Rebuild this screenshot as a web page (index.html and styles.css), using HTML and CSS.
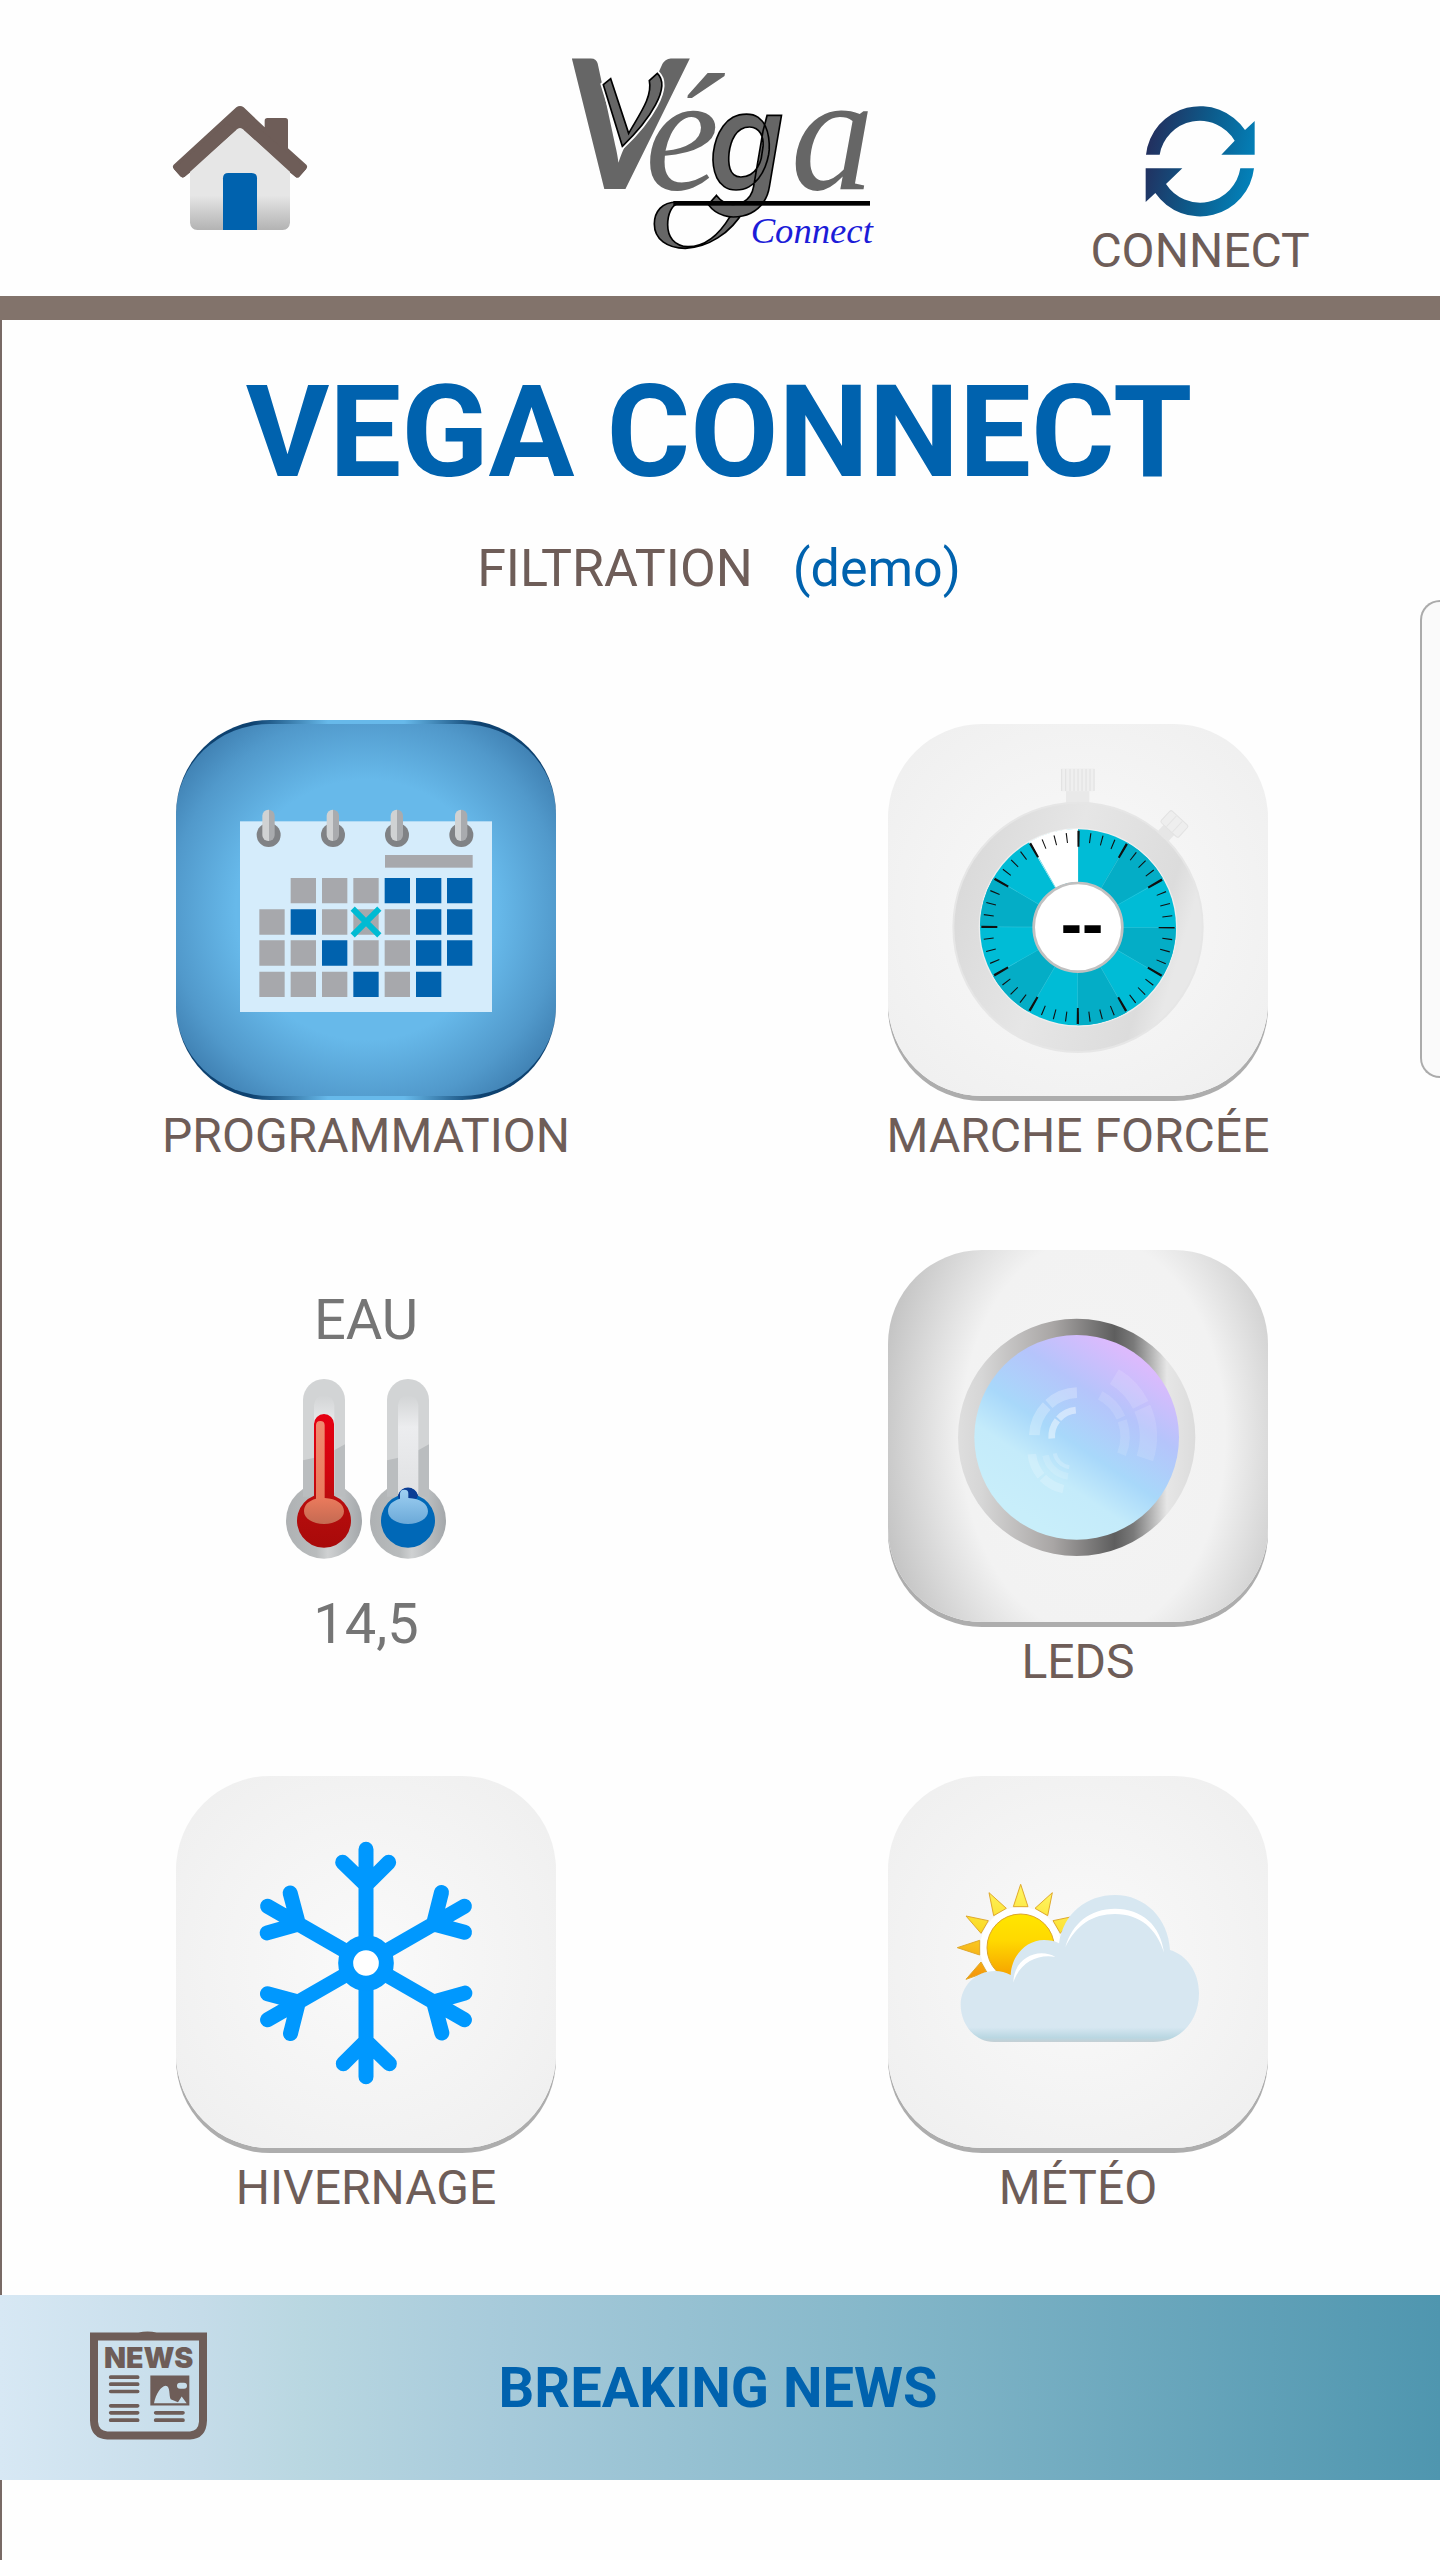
FILE: index.html
```html
<!DOCTYPE html>
<html lang="fr">
<head>
    <meta charset="UTF-8">
    <meta name="viewport" content="width=device-width, initial-scale=1.0">
    <title>Vega Connect</title>
    <link rel="stylesheet" href="styles.css">
</head>
<body>
    <header class="header">
        <button type="button" class="nav-btn" aria-label="Accueil">
            <svg class="home-icon" viewBox="516 315 408 378">
                <defs>
                    <linearGradient id="wall" x1="0" y1="0" x2="0" y2="1">
                        <stop offset="0" stop-color="#e6e6e6"/>
                        <stop offset=".66" stop-color="#e6e6e6"/>
                        <stop offset="1" stop-color="#b3b3b3"/>
                    </linearGradient>
                </defs>
                <path fill="#6e5d58" d="M794 382V362Q794 354 802 354H856Q864 354 864 362V445L919 494Q924 500 919 506L898 530Q892 535 886 530L720 400 554 530Q547 535 541 529L521 506Q516 500 521 494L709 322Q720 314 731 322Z"/>
                <path fill="url(#wall)" d="M570 512L709 389Q720 379 731 389L870 512V668Q868 688 848 690H592Q572 688 570 668Z"/>
                <path fill="#6e5d58" d="M521 506L541 529Q547 535 554 530L709 389 680 370ZM919 506L898 530Q892 535 886 530L731 389 760 370Z"/>
                <path fill="#0062ae" d="M669 690V535Q669 519 685 519H755Q771 519 771 535V690Z"/>
            </svg>
        </button>
        <svg class="logo" viewBox="90 60 900 600" role="img" aria-label="Véga Connect">
            <g fill="#666">
                <text class="logo-v" x="70" y="476">V</text>
                <!-- chevron inlaid in the V -->
                <path fill="none" stroke="#fefefe" stroke-width="16" d="M190 164L212 146 266 310C300 250 338 200 328 152L352 130C394 170 330 270 247 349Z"/>
                <path stroke="#000" stroke-width="5" d="M190 164L212 146 266 310C300 250 338 200 328 152L352 130C394 170 330 270 247 349Z"/>
                <text class="logo-letter" x="315" y="478">é</text>
                <path stroke="#000" stroke-width="5" d="M410 516C366 516 343 545 343 582 343 628 382 655 436 655 500 653 572 612 612 540L570 560C540 610 500 650 444 650 402 648 383 620 383 584 383 550 396 528 410 522Z"/>
                <text class="logo-g" x="506" y="474">g</text>
                <text class="logo-letter" x="752" y="478">a</text>
            </g>
            <rect x="400" y="513" width="590" height="14"/>
            <text class="logo-sub" x="632" y="640">Connect</text>
        </svg>
        <button type="button" class="nav-btn">
            <svg class="sync-icon" viewBox="255 75 330 336">
                <defs>
                    <linearGradient id="sync" gradientUnits="userSpaceOnUse" x1="265" y1="200" x2="575" y2="270">
                        <stop offset="0" stop-color="#22305f"/>
                        <stop offset=".5" stop-color="#0d5a8a"/>
                        <stop offset="1" stop-color="#0380b8"/>
                    </linearGradient>
                </defs>
                <g fill="url(#sync)">
                    <path d="M258 224A163 163 0 0 1 555 150L584 123V224H484L524 182A122 122 0 0 0 299 224Z"/>
                    <path d="M582 265A163 163 0 0 1 286 339L257 366V265H367L318 312A122 122 0 0 0 541 265Z"/>
                </g>
            </svg>
            <span class="label">CONNECT</span>
        </button>
    </header>

    <main class="main">
        <h1 class="title">VEGA CONNECT</h1>
        <p class="subtitle"><span>FILTRATION</span><span class="demo">(demo)</span></p>

        <div class="tiles">
            <button type="button" class="tile-btn">
                <span class="tile tile-active">
                    <svg viewBox="48 72 1140 1116">
                        <defs>
                            <linearGradient id="pin">
                                <stop offset=".5" stop-color="#d0d2d3"/>
                                <stop offset=".5" stop-color="#a9abae"/>
                            </linearGradient>
                        </defs>
                        <rect x="240" y="364" width="756" height="572" fill="#d5ecfb"/>
                        <g fill="#808285">
                            <circle cx="326" cy="405" r="36"/>
                            <circle cx="519" cy="405" r="36"/>
                            <circle cx="711" cy="405" r="36"/>
                            <circle cx="904" cy="405" r="36"/>
                        </g>
                        <g fill="url(#pin)">
                            <rect x="307" y="329" width="37" height="94" rx="18"/>
                            <rect x="500" y="329" width="37" height="94" rx="18"/>
                            <rect x="692" y="329" width="37" height="94" rx="18"/>
                            <rect x="885" y="329" width="37" height="94" rx="18"/>
                        </g>
                        <rect x="675" y="465" width="263" height="38" fill="#a7a8ac"/>
                        <path fill="#a7a8ac" d="M392 534h76v76h-76zM486 534h76v76h-76zM580 534h76v76h-76zM298 628h76v76h-76zM486 628h76v76h-76zM580 628h76v76h-76zM674 628h76v76h-76zM298 721h76v76h-76zM392 721h76v76h-76zM580 721h76v76h-76zM674 721h76v76h-76zM298 815h76v76h-76zM392 815h76v76h-76zM486 815h76v76h-76zM674 815h76v76h-76z"/>
                        <path fill="#0062ae" d="M674 534h76v76h-76zM768 534h76v76h-76zM861 534h76v76h-76zM392 628h76v76h-76zM768 628h76v76h-76zM861 628h76v76h-76zM486 721h76v76h-76zM768 721h76v76h-76zM861 721h76v76h-76zM580 815h76v76h-76zM768 815h76v76h-76z"/>
                        <path d="M578 626L658 706M658 626L578 706" stroke="#00bbd3" stroke-width="18"/>
                    </svg>
                </span>
                <span class="label">PROGRAMMATION</span>
            </button>

            <button type="button" class="tile-btn">
                <span class="tile">
                    <svg viewBox="54 72 1140 1116">
                        <defs>
                            <linearGradient id="case" x1="0" y1="0" x2="1" y2=".3">
                                <stop offset="0" stop-color="#e6e6e6"/>
                                <stop offset=".12" stop-color="#dadada"/>
                                <stop offset=".5" stop-color="#e6e6e6"/>
                                <stop offset=".9" stop-color="#dcdcdc"/>
                                <stop offset="1" stop-color="#e8e8e8"/>
                            </linearGradient>
                        </defs>
                        <rect x="588" y="270" width="70" height="44" fill="#e9e9e9"/>
                        <rect x="573" y="205" width="101" height="69" rx="4" fill="#efefef"/>
                        <path d="M575 207v66M587 207v66M600 207v66M612 207v66M624 207v66M636 207v66M648 207v66M660 207v66M672 207v66" stroke="#e0e0e0" stroke-width="3"/>
                        <g transform="rotate(43 624 682)">
                            <rect x="602" y="272" width="44" height="40" fill="#e6e6e6"/>
                            <rect x="588" y="234" width="72" height="48" rx="6" fill="#eee" stroke="#e2e2e2" stroke-width="3"/>
                            <path d="M612 236v44M636 236v44" stroke="#e4e4e4" stroke-width="3"/>
                        </g>
                        <circle cx="624" cy="682" r="374" fill="url(#case)" stroke="#e6e6e6" stroke-width="6"/>
                        <circle cx="624" cy="682" r="298" fill="#eee"/>
                        <circle cx="624" cy="682" r="294" fill="#00bcd6"/>
                        <g fill="none" stroke-width="160">
                            <circle cx="624" cy="682" r="214" pathLength="12" stroke="#04adc6" stroke-dasharray="1 1" transform="rotate(-60 624 682)"/>
                            <circle cx="624" cy="682" r="216" pathLength="12" stroke="#fff" stroke-dasharray="1 11" transform="rotate(-120 624 682)"/>
                            <circle cx="624" cy="682" r="214" pathLength="360" stroke="#3cc8dc" stroke-dasharray=".4 29.6"/>
                        </g>
                        <g fill="none" stroke="#111">
                            <circle cx="624" cy="682" r="266" pathLength="360" stroke-width="48" stroke-dasharray="1.4 28.6" stroke-dashoffset=".7"/>
                            <circle cx="624" cy="682" r="270" pathLength="360" stroke-width="30" stroke-dasharray=".7 6.8" stroke-dashoffset=".35"/>
                        </g>
                        <circle cx="624" cy="682" r="133" fill="#fff" stroke="#c0c0c0" stroke-width="8"/>
                        <text class="timer" x="636" y="738">--</text>
                    </svg>
                </span>
                <span class="label">MARCHE FORCÉE</span>
            </button>

            <div class="water">
                <span>EAU</span>
                <svg class="thermo" viewBox="45 324 486 546">
                    <defs>
                        <linearGradient id="glass" x1="0" y1="0" x2="0" y2="1">
                            <stop offset="0" stop-color="#d2d4d5"/>
                            <stop offset=".3" stop-color="#ecedef"/>
                            <stop offset="1" stop-color="#dfe0e2"/>
                        </linearGradient>
                        <linearGradient id="bulb">
                            <stop offset="0" stop-color="#aeb1b3"/>
                            <stop offset=".4" stop-color="#b9bcbd"/>
                            <stop offset=".55" stop-color="#cfd1d2"/>
                            <stop offset="1" stop-color="#a3a7aa"/>
                        </linearGradient>
                        <linearGradient id="red" x1="0" y1="0" x2="0" y2="1">
                            <stop offset="0" stop-color="#e60012"/>
                            <stop offset=".45" stop-color="#d0050e"/>
                            <stop offset=".65" stop-color="#b80d0d"/>
                            <stop offset="1" stop-color="#a80a0a"/>
                        </linearGradient>
                        <linearGradient id="redshine" x1="0" y1="0" x2="0" y2="1">
                            <stop offset="0" stop-color="#f08a70"/>
                            <stop offset=".75" stop-color="#ea7a5c"/>
                            <stop offset="1" stop-color="#c46a52"/>
                        </linearGradient>
                        <linearGradient id="blueshine" x1="0" y1="0" x2="0" y2="1">
                            <stop offset="0" stop-color="#9fd0f2"/>
                            <stop offset="1" stop-color="#6ba9d8"/>
                        </linearGradient>
                        <g id="tube">
                            <circle cx="162" cy="752" r="114" fill="url(#bulb)"/>
                            <path fill="#d2d4d5" d="M99 390A63 63 0 0 1 225 390V670H99Z"/>
                            <path fill="#babdbf" d="M99 571Q165 560 225 523V680H99Z"/>
                            <rect x="132" y="376" width="61" height="320" rx="30" fill="url(#glass)"/>
                        </g>
                    </defs>
                    <use href="#tube"/>
                    <use href="#tube" x="252"/>
                    <path fill="url(#red)" d="M132 462A30 30 0 0 1 192 462V677A81 81 0 1 1 132 677Z"/>
                    <path fill="url(#redshine)" d="M138 466Q138 453 151 453T164 466V684C200 686 222 702 222 724 222 746 196 762 162 762S102 746 102 724C102 704 116 692 138 686Z"/>
                    <path fill="#0068b7" d="M384 677A81 81 0 1 0 444 677 31 31 0 0 0 384 677Z"/>
                    <path fill="#0a3d94" d="M384 676A31 31 0 0 1 444 676L440 686H386Z"/>
                    <path fill="url(#blueshine)" d="M390 672Q390 659 403 659T415 672V684C452 686 474 702 474 724 474 746 448 762 414 762S354 746 354 724C354 704 368 692 390 686Z"/>
                </svg>
                <span>14,5</span>
            </div>

            <button type="button" class="tile-btn">
                <span class="tile tile-leds">
                    <svg viewBox="54 60 1140 1116">
                        <defs>
                            <linearGradient id="ring">
                                <stop offset="0" stop-color="#dedede"/>
                                <stop offset=".1" stop-color="#d6d6d6"/>
                                <stop offset=".4" stop-color="#a9a6a5"/>
                                <stop offset=".66" stop-color="#5e5e5e"/>
                                <stop offset=".74" stop-color="#7a7a7a"/>
                                <stop offset=".88" stop-color="#e6e6e6"/>
                                <stop offset="1" stop-color="#dcdcdc"/>
                            </linearGradient>
                            <linearGradient id="lens" x1=".28" y1=".9" x2=".8" y2=".12">
                                <stop offset="0" stop-color="#c8eefa"/>
                                <stop offset=".25" stop-color="#c4ebfa"/>
                                <stop offset=".45" stop-color="#a8d8fa"/>
                                <stop offset=".72" stop-color="#b5c4fb"/>
                                <stop offset="1" stop-color="#dcbafd"/>
                            </linearGradient>
                        </defs>
                        <circle cx="620" cy="622" r="356" fill="url(#ring)"/>
                        <circle cx="620" cy="622" r="307" fill="url(#lens)"/>
                        <g fill="none" stroke="#fff">
                            <circle cx="625" cy="620" r="132" pathLength="360" stroke-width="32" stroke-opacity=".25" stroke-dasharray="42 4 40 274" transform="rotate(182 625 620)"/>
                            <circle cx="625" cy="620" r="80" pathLength="360" stroke-width="20" stroke-opacity=".45" stroke-dasharray="42 4 42 272" transform="rotate(176 625 620)"/>
                            <circle cx="625" cy="620" r="140" pathLength="360" stroke-width="28" stroke-opacity=".13" stroke-dasharray="38 4 42 276" transform="rotate(-62 625 620)"/>
                            <circle cx="625" cy="620" r="210" pathLength="360" stroke-width="52" stroke-opacity=".13" stroke-dasharray="32 3 42 283" transform="rotate(-59 625 620)"/>
                            <circle cx="605" cy="660" r="120" pathLength="360" stroke-width="26" stroke-opacity=".2" stroke-dasharray="34 4 34 288" transform="rotate(102 605 660)"/>
                            <circle cx="605" cy="660" r="80" pathLength="360" stroke-width="20" stroke-opacity=".15" stroke-dasharray="70 290" transform="rotate(98 605 660)"/>
                            <circle cx="605" cy="660" r="52" pathLength="360" stroke-width="12" stroke-opacity=".2" stroke-dasharray="70 290" transform="rotate(98 605 660)"/>
                        </g>
                    </svg>
                </span>
                <span class="label">LEDS</span>
            </button>

            <button type="button" class="tile-btn">
                <span class="tile">
                    <svg viewBox="48 48 1140 1116">
                        <defs>
                            <path id="arm" d="M618 548V268M548 307L618 375 686 307"/>
                        </defs>
                        <g fill="none" stroke="#0098fe" stroke-width="45" stroke-linecap="round">
                            <use href="#arm"/>
                            <use href="#arm" transform="rotate(60 618 609)"/>
                            <use href="#arm" transform="rotate(120 618 609)"/>
                            <use href="#arm" transform="rotate(180 618 609)"/>
                            <use href="#arm" transform="rotate(240 618 609)"/>
                            <use href="#arm" transform="rotate(300 618 609)"/>
                            <circle cx="618" cy="609" r="61" fill="#fff"/>
                        </g>
                    </svg>
                </span>
                <span class="label">HIVERNAGE</span>
            </button>

            <button type="button" class="tile-btn">
                <span class="tile">
                    <svg viewBox="54 48 1140 1116">
                        <defs>
                            <linearGradient id="sun" x1="0" y1="0" x2="0" y2="1">
                                <stop offset="0" stop-color="#ffe600"/>
                                <stop offset=".4" stop-color="#ffd800"/>
                                <stop offset="1" stop-color="#f59a00"/>
                            </linearGradient>
                            <linearGradient id="rays" gradientUnits="userSpaceOnUse" x1="452" y1="373" x2="400" y2="660">
                                <stop offset="0" stop-color="#fff766"/>
                                <stop offset=".5" stop-color="#fbdc28"/>
                                <stop offset="1" stop-color="#f5990b"/>
                            </linearGradient>
                            <linearGradient id="cloud" x1="0" y1="0" x2="0" y2="1">
                                <stop offset="0" stop-color="#d7e7f1"/>
                                <stop offset=".9" stop-color="#d7e7f1"/>
                                <stop offset=".97" stop-color="#b9d7e2"/>
                                <stop offset="1" stop-color="#c5cfd4"/>
                            </linearGradient>
                        </defs>
                        <circle cx="452" cy="563" r="122" fill="#fff"/>
                        <path fill="url(#rays)" stroke="#e0a92c" stroke-width="3" d="M452 373L474 440H430ZM547 398L533 467 495 445ZM616 468L571 520 549 482ZM357 398L371 467 409 445ZM288 468L333 520 355 482ZM262 563L329 541V585ZM288 658L333 606 350 636Z"/>
                        <circle cx="452" cy="563" r="101" fill="url(#sun)" stroke="#dca62c" stroke-width="3"/>
                        <path fill="url(#cloud)" d="M372 846C312 846 272 790 272 735 272 680 315 633 375 633Q400 633 422 645C425 585 470 540 522 540Q548 540 567 550C580 460 650 405 735 405 825 405 895 475 900 570 950 585 987 635 987 700 987 785 930 846 850 846Z"/>
                        <path fill="#fff" d="M586 562C606 490 660 446 735 446 815 446 872 495 882 578 860 506 810 462 735 462 668 462 618 495 586 562ZM430 668C430 615 470 580 515 580Q538 580 556 591C505 582 450 605 430 668Z"/>
                    </svg>
                </span>
                <span class="label">MÉTÉO</span>
            </button>
        </div>

        <button type="button" class="news-bar">
            <svg class="news-icon" viewBox="270 182 351 326">
                <g fill="#6e5d58">
                    <path d="M415 186Q443 180 470 186H621V450Q619 505 570 507H322Q272 505 270 450V186ZM294 210V454Q296 481 322 483H570Q595 481 597 454V210Z"/>
                    <text class="news-text" x="446" y="291">NEWS</text>
                    <path fill-rule="evenodd" d="M451 315H568V405H451ZM462 398C468 370 482 348 497 346 512 348 506 374 512 386L534 395 545 378 560 398ZM540 337H552A9 9 0 0 1 552 355H540A9 9 0 0 1 540 337Z"/>
                </g>
                <path d="M332 320H413M332 341H413M332 363H413M332 406H413M332 427H413M332 449H413M467 427H549M467 449H549" stroke="#6e5d58" stroke-width="11" stroke-linecap="round"/>
            </svg>
            <span class="news-title">BREAKING NEWS</span>
        </button>
    </main>
    <div class="edge-panel"></div>
</body>
</html>
```
FILE: styles.css
```css
* {
    box-sizing: border-box;
}
body {
    margin: 0;
    min-height: 100vh;
    display: flex;
    flex-direction: column;
    position: relative;
    overflow-x: hidden;
    background-color: #fefefe;
    font-family: Roboto, sans-serif;
    color: #6e5d58;
}
button {
    padding: 0;
    border: none;
    background: none;
    font-family: inherit;
    color: inherit;
    cursor: pointer;
}
svg {
    display: block;
}

/* header */
.header {
    display: grid;
    grid-template-columns: repeat(3, 1fr);
    justify-items: center;
    align-items: start;
    height: 320px;
    padding-top: 50px;
    border-bottom: 24px solid #82736b;
}
.nav-btn {
    display: flex;
    flex-direction: column;
    align-items: center;
    gap: 6px;
    margin-top: 55px;
}
.home-icon {
    width: 136px;
    height: 126px;
}
.sync-icon {
    width: 110px;
    height: 112px;
}
.logo {
    width: 300px;
    height: 200px;
    overflow: visible;
}
.logo-v {
    font: italic 700 540px Lato, sans-serif;
}
.logo-letter {
    font: italic 500px "Liberation Serif", serif;
}
.logo-g {
    font: italic 500 410px Roboto, sans-serif;
    stroke: #000;
    stroke-width: 5px;
}
.logo-sub {
    font: italic 110px "Liberation Serif", serif;
    fill: #1c1cd8;
}
.label {
    font-size: 48px;
    line-height: 56px;
}

/* content */
.main {
    flex: 1;
    display: flex;
    flex-direction: column;
    padding-right: 4px;
    border-left: 2px solid #786a65;
}
.title {
    margin: 37px 0 32px;
    text-align: center;
    font-size: 128px;
    line-height: 150px;
    font-weight: 700;
    color: #0062ae;
}
.subtitle {
    display: flex;
    justify-content: center;
    gap: 40px;
    margin: 0 0 121px;
    font-size: 52px;
    line-height: 60px;
}
.demo {
    color: #0062ae;
}
.tiles {
    display: grid;
    grid-template-columns: repeat(2, 1fr);
    justify-items: center;
    align-items: start;
    gap: 82px 0;
    padding: 0 2px 0 8px;
}
.tile-btn {
    display: flex;
    flex-direction: column;
    align-items: center;
    gap: 8px;
}
.tile {
    display: block;
    width: 380px;
    height: 372px;
    margin: 4px 0;
    border-radius: 94px;
    background: radial-gradient(circle, #fafafa 0%, #f3f3f3 60%, #eee 100%);
    box-shadow: 0 5px 0 #adadad;
}
.tile svg {
    width: 380px;
    height: 372px;
}
.tile-active {
    height: 380px;
    margin: 0;
    border-top: 4px solid transparent;
    border-bottom: 4px solid transparent;
    background:
        radial-gradient(circle closest-side, #67b9ea 0%, #67b9ea 70%, #5199cb 105%, #3a79ab 130%) padding-box,
        linear-gradient(90deg, #0e4270 20%, #67b9ea 40%, #67b9ea 60%, #0e4270 80%) border-box;
    box-shadow: none;
}
.tile-leds {
    background: radial-gradient(ellipse 220px 330px at 54% 50%, #f4f4f4 0%, #f2f2f2 60%, #c2c2c2 100%);
}
.timer {
    font: 700 192px "Liberation Sans", sans-serif;
    text-anchor: middle;
}
.water {
    display: flex;
    flex-direction: column;
    align-items: center;
    padding-top: 42px;
    font-size: 56px;
    line-height: 64px;
    color: #757575;
}
.thermo {
    width: 162px;
    height: 182px;
    margin: 26px 0 32px;
}

/* news */
.news-bar {
    display: grid;
    grid-template-columns: 1fr auto 1fr;
    align-items: center;
    height: 185px;
    margin: 79px -4px 80px -2px;
    padding: 0 94px 0 90px;
    background: linear-gradient(90deg, #d7e8f4 0%, #c5dce9 14%, #b9d7e1 21%, #a8cbdb 34%, #86b8ca 60%, #4f96af 100%);
}
.news-icon {
    width: 117px;
    height: 109px;
    margin-bottom: 4px;
}
.news-text {
    font: 900 86px Inter, sans-serif;
    text-anchor: middle;
}
.news-title {
    font-size: 56px;
    line-height: 64px;
    font-weight: 700;
    color: #0062ae;
}

/* drawer handle on the right edge */
.edge-panel {
    position: absolute;
    top: 600px;
    right: -2px;
    width: 22px;
    height: 478px;
    border: 2px solid #ababab;
    border-right: none;
    border-radius: 20px 0 0 20px;
    background-color: #fafafa;
}
```
